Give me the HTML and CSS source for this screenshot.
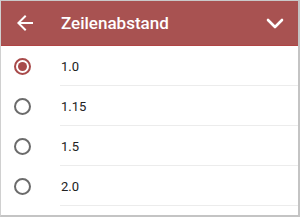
FILE: index.html
```html
<!DOCTYPE html>
<html lang="de">
<head>
<meta charset="utf-8">
<link rel="stylesheet" href="styles.css">
</head>
<body>
<div class="frame">
  <header class="bar">
    <span class="icon back">
      <svg width="24" height="24" viewBox="0 0 24 24"><path d="M20 11H7.83l5.59-5.59L12 4l-8 8 8 8 1.41-1.41L7.83 13H20v-2z" fill="#fff"/></svg>
    </span>
    <h1 class="title">Zeilenabstand</h1>
    <span class="icon chev">
      <svg width="24" height="24" viewBox="0 0 24 24"><path d="M5 9l7 7 7-7" fill="none" stroke="#fff" stroke-width="2.6" stroke-linecap="round" stroke-linejoin="round"/></svg>
    </span>
  </header>
  <ul class="list">
    <li class="row"><span class="radio on"></span><span class="label">1.0</span></li>
    <li class="row"><span class="radio"></span><span class="label">1.15</span></li>
    <li class="row"><span class="radio"></span><span class="label">1.5</span></li>
    <li class="row"><span class="radio"></span><span class="label">2.0</span></li>
  </ul>
</div>
</body>
</html>
```
FILE: styles.css
```css
html, body {
  margin: 0;
  padding: 0;
  background: #fff;
}
.frame {
  width: 300px;
  height: 217px;
  box-sizing: border-box;
  border-top: 1px solid #c9c9c9;
  border-left: 1px solid #d0d0d0;
  border-right: 2px solid #c4c4c4;
  border-bottom: 2px solid #c4c4c4;
  overflow: hidden;
  font-family: Roboto, "Noto Sans", sans-serif;
  background: #fff;
}
.bar {
  height: 45px;
  box-sizing: border-box;
  background: #a85251;
  border-bottom: 1px solid #b04444;
  display: flex;
  align-items: center;
  color: #fff;
}
.icon {
  display: flex;
  align-items: center;
  justify-content: center;
}
.back {
  width: 46px;
  padding-left: 1px;
}
.title {
  margin: 0 0 0 13px;
  font-size: 17px;
  font-weight: 500;
  flex: 1;
}
.chev {
  width: 24px;
  margin-right: 11px;
}
.list {
  list-style: none;
  margin: 0;
  padding: 0;
}
.row {
  height: 40px;
  display: flex;
  align-items: center;
  position: relative;
}
.row::after {
  content: "";
  position: absolute;
  left: 59px;
  right: 0;
  bottom: 0;
  height: 1px;
  background: #ececec;
}
.radio {
  width: 17px;
  height: 17px;
  box-sizing: border-box;
  border: 2px solid #6b6b6b;
  border-radius: 50%;
  margin-left: 13px;
  margin-right: 30px;
  display: flex;
  align-items: center;
  justify-content: center;
}
.radio.on {
  border-color: #a84a4a;
}
.radio.on::before {
  content: "";
  width: 9px;
  height: 9px;
  border-radius: 50%;
  background: #a84a4a;
}
.label {
  font-size: 13px;
  color: #222;
}
```
